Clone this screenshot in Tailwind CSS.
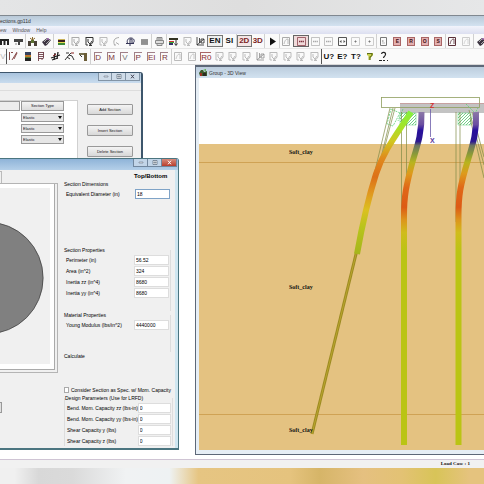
<!DOCTYPE html>
<html lang="en">

<head>
    <meta charset="UTF-8">
    <meta name="viewport" content="width=device-width, initial-scale=1.0">
    <script src="https://cdn.jsdelivr.net/npm/@tailwindcss/browser@4"></script>
    <title>Group - 3D View</title>
</head>

<body class="min-h-screen flex flex-col overflow-hidden bg-white font-['Liberation_Sans',sans-serif] text-[5px] leading-[8px] text-[#111]">

    <!-- Icon sprites -->
    <svg class="hidden">
        <symbol id="i-piles" viewBox="0 0 11 11"><path d="M1 3h9v2H1zM1 5h2v4H1zM4.500 5h2v4h-2zM8 5h2v4H8z" fill="#222" /></symbol>
        <symbol id="i-cap" viewBox="0 0 11 11"><path d="M1 3h9v3H7v3H5V6H1z" fill="#444" /><path d="M2 8h2" stroke="#888" /></symbol>
        <symbol id="i-load" viewBox="0 0 11 11"><path d="M5.500 1v3M3 2l2.500 2L8 2" stroke="#8a6a30" fill="none" /><path d="M1 5h9v2H1zM1 7h3v3H1zM7 7h3v3H7z" fill="#4a4238" /><path d="M4 4h3v3H4z" fill="#5a7030" /></symbol>
        <symbol id="i-tag" viewBox="0 0 11 11"><path d="M1 6l5-4 4 2-4 5-2 1z" fill="#3b3340" /><path d="M3 6l3-3M5 8l4-4" stroke="#aaa" /><circle cx="7" cy="3" r="1" fill="#a06ab0" /></symbol>
        <symbol id="i-layers" viewBox="0 0 11 11"><path d="M2 3h7v1H2z" fill="#c9b15a" /><path d="M2 4h7v2H2z" fill="#3c2020" /><path d="M2 6h7v1H2z" fill="#e4d84a" /><path d="M2 7h7v2H2z" fill="#3f8a3a" /></symbol>
        <symbol id="i-plot" viewBox="0 0 11 11"><path d="M2 1v8h2M2 1.500h7V6L7 8.500H5.500M4 3v3l2 2 2-3" stroke="currentColor" fill="none" /><path d="M5 9.500h3" stroke="currentColor" /></symbol>
        <symbol id="i-curve" viewBox="0 0 11 11"><path d="M8 1.500C3 2 2 5 3.500 9M5 6.500l3 2M3 9h2" stroke="currentColor" fill="none" /></symbol>
        <symbol id="i-rotate" viewBox="0 0 11 11"><path d="M3 8C1 5 3 1.500 6.500 2S10 7 7 7.500M1 7.500h8M5 3v7M5 3h2v4" stroke="currentColor" fill="none" /></symbol>
        <symbol id="i-block" viewBox="0 0 11 11"><path d="M2 3h7v6H2z" fill="#999" /><path d="M2 5h7M2 7h7" stroke="#777" stroke-width=".5" /></symbol>
        <symbol id="i-printer" viewBox="0 0 11 11"><path d="M3 4V1.500h5V4M1.500 4.500h8v3h-8zM3 7v2.500h5V7M4 3h3" stroke="#888" fill="#ddd" /></symbol>
        <symbol id="i-legend" viewBox="0 0 11 11"><path d="M1 2h9v2H1z" fill="#332" /><path d="M1 5h5v1H1z" fill="#c33" /><path d="M1 6h5v1H1z" fill="#3a3" /><path d="M1 7h4v2H1z" fill="#336" /><path d="M8 4v5M6.500 7.500l1.500 2 1.500-2" stroke="#333" fill="none" /></symbol>
        <symbol id="i-axis" viewBox="0 0 11 11"><path d="M2 1v8h7M4.500 2v5M6 3h3v4H6zM2 9l7-6" stroke="#222" fill="none" stroke-width=".8" /></symbol>
        <symbol id="i-play" viewBox="0 0 11 11"><path d="M3 1.500l6 4-6 4z" fill="#111" /></symbol>
        <symbol id="i-frame" viewBox="0 0 11 11"><path d="M1.500 1.500h8v8h-8z" stroke="currentColor" stroke-width=".7" fill="none" /><path d="M3 5.500h5" stroke="currentColor" stroke-width="1.500" stroke-dasharray="1.300 .5" /></symbol>
        <symbol id="i-fit" viewBox="0 0 11 11"><path d="M1.500 1.500h8v8h-8z" stroke="currentColor" fill="none" /><path d="M2.500 5.500L4.500 4v3zM8.500 5.500L6.500 4v3z" fill="currentColor" /></symbol>
        <symbol id="i-dot" viewBox="0 0 11 11"><path d="M1.500 1.500h8v8h-8z" stroke="#ccc" fill="none" /><path d="M4.500 5.500h2M5.500 4.500v2" stroke="#777" /></symbol>
        <symbol id="i-page" viewBox="0 0 11 11"><path d="M2.500 1.500h6v8h-6zM4 5h1.500" stroke="#777" fill="none" /><path d="M4 7h3" stroke="#bbb" /></symbol>
        <symbol id="i-graph" viewBox="0 0 11 11"><path d="M1.500 1.500h7v8h-7z" stroke="currentColor" fill="none" /><path d="M3 8c1-4 2-5 4-5v5" stroke="currentColor" fill="none" stroke-width=".8" /></symbol>
        <symbol id="i-batter" viewBox="0 0 11 11"><path d="M1.500 1v8M3 1.500h2M4 9L9 1M6 8l3-6" stroke="#7a3535" fill="none" stroke-width=".9" /></symbol>
        <symbol id="i-soil" viewBox="0 0 11 11"><path d="M3 1h6v3H3z" fill="#35415c" /><path d="M3 4h6v2H3z" fill="#c0792c" /><path d="M3 6h6v1H3z" fill="#4d7a3a" /><path d="M3 7h6v3H3z" fill="#222" /></symbol>
        <symbol id="i-table" viewBox="0 0 11 11"><path d="M2.500 1v9M2 1.500h6M2 3.500h6M2 5.500h6M2 7.500h5M7.500 1v6l-2 2" stroke="#6e4048" fill="none" stroke-width=".9" /></symbol>
        <symbol id="i-hash" viewBox="0 0 11 11"><path d="M1 7l9-3M2 9l6-2M4 9l1-7M7 8l1-7" stroke="#222" stroke-width="1.300" /><path d="M3 5l3-2" stroke="#8a2020" /></symbol>
        <symbol id="i-force" viewBox="0 0 11 11"><path d="M1 9l4-5 2-2M5 4l3 1 2 4M2 2h3M3 6l3 2" stroke="#333" fill="none" /><path d="M7 2h3" stroke="#8a2020" /></symbol>
        <symbol id="i-wall" viewBox="0 0 11 11"><path d="M1 2h7v2H1z" fill="#777050" /><path d="M6 2h3v8H6z" fill="#6b5d38" /><path d="M2 4l2 2" stroke="#333" /></symbol>
        <symbol id="i-bulb" viewBox="0 0 11 11"><path d="M3 2h6v2L6.500 7V9h-2V5L3 4z" fill="#a9b52c" /><path d="M3 2.500h5v2L6 6v3" stroke="#4d5a1c" stroke-width=".8" fill="none" /><path d="M4 4h3" stroke="#e8ee70" /></symbol>
        <symbol id="i-help" viewBox="0 0 11 11"><path d="M3.500 3C4 .5 8 1 7.500 3.500S5.500 5 5.500 7M1 9.500h3M5 9.500h2M9 9.500h1" stroke="#222" fill="none" stroke-width="1.200" /></symbol>
        <symbol id="i-min" viewBox="0 0 9 5"><path d="M3 2h4v1H3z" fill="#fff" stroke="#56677a" stroke-width=".5" /></symbol>
        <symbol id="i-max" viewBox="0 0 9 5"><path d="M3 .5h4v4H3zM4 2h2v1H4z" fill="#fff" stroke="#56677a" stroke-width=".7" /></symbol>
        <symbol id="i-close" viewBox="0 0 9 5"><path d="M3 .7l3 3.600M6 .7L3 4.300" stroke="currentColor" stroke-width="1" /></symbol>
    </svg>

    <!-- Faded band above the application -->
    <div class="h-[15px] bg-linear-to-r from-[#e4e5e6] via-[#dedede] to-[#e6e7e8]"></div>

    <header class="border-t border-[#808890]">
        <div class="h-[10px] pt-px bg-linear-to-b from-[#b9c9d8] to-[#d3e2f0]">
            <h1 class="leading-[8px] text-[#333]">ections.gp11d</h1>
        </div>
        <nav class="flex h-[8px] gap-[6px] bg-linear-to-b from-[#f2f4fb] to-[#dcdff0] text-[#555]">
            <a href="#">ew</a>
            <a href="#">Window</a>
            <a href="#">Help</a>
        </nav>

        <!-- Toolbar 1 -->
        <div class="flex h-[15px] -ml-[3px] bg-[#fafafa] border-b border-[#e6e6e6] font-bold text-[8px] *:flex *:shrink-0 *:items-center *:border-[#d0d0d0] [&_button]:flex [&_button]:flex-1 [&_button]:h-[12px] [&_button]:items-center [&_button]:justify-center [&_svg]:size-[11px]">
            <div class="w-[28px]">
                <button aria-label="Piles"><svg><use href="#i-piles" /></svg></button>
                <button aria-label="Cap"><svg><use href="#i-cap" /></svg></button>
            </div>
            <div class="w-[28px] border-l">
                <button aria-label="Loads"><svg><use href="#i-load" /></svg></button>
                <button aria-label="Properties"><svg><use href="#i-tag" /></svg></button>
            </div>
            <div class="w-[15px] border-l">
                <button aria-label="Layers"><svg><use href="#i-layers" /></svg></button>
            </div>
            <div class="w-[83px] border-l text-[#aaa]">
                <button aria-label="Plot"><svg><use href="#i-plot" /></svg></button>
                <button aria-label="Plot values" class="text-[#333]"><svg><use href="#i-plot" /></svg></button>
                <button aria-label="Plot forces" class="text-[#bbb]"><svg><use href="#i-plot" /></svg></button>
                <button aria-label="Curve"><svg><use href="#i-curve" /></svg></button>
                <button aria-label="Rotate" class="text-[#335]"><svg><use href="#i-rotate" /></svg></button>
                <button aria-label="Block"><svg><use href="#i-block" /></svg></button>
            </div>
            <div class="w-[15px] border-l">
                <button aria-label="Print"><svg><use href="#i-printer" /></svg></button>
            </div>
            <div class="w-[70px] border-l">
                <button aria-label="Legend"><svg><use href="#i-legend" /></svg></button>
                <button aria-label="Plot legend" class="text-[#bbb]"><svg><use href="#i-plot" /></svg></button>
                <button aria-label="Axis"><svg><use href="#i-axis" /></svg></button>
                <button class="border border-[#777] bg-[#eee]">EN</button>
                <button>SI</button>
            </div>
            <div class="w-[28px] border-l text-[#7c1f1f]">
                <button class="border border-[#777] bg-[#f4e6e6]">2D</button>
                <button>3D</button>
            </div>
            <div class="w-[15px] border-l">
                <button aria-label="Run"><svg><use href="#i-play" /></svg></button>
            </div>
            <div class="w-[97px] border-l text-[#aaa]">
                <button aria-label="Graph"><svg><use href="#i-graph" /></svg></button>
                <button aria-label="Fit width" class="border border-[#666] bg-[#f0dada] text-[#7c2f3c]"><svg><use href="#i-frame" /></svg></button>
                <button aria-label="Frame"><svg><use href="#i-frame" /></svg></button>
                <button aria-label="Window"><svg><use href="#i-frame" /></svg></button>
                <button aria-label="Zoom fit" class="text-[#555]"><svg><use href="#i-fit" /></svg></button>
                <button aria-label="Zoom in"><svg><use href="#i-dot" /></svg></button>
                <button aria-label="Zoom out"><svg><use href="#i-dot" /></svg></button>
            </div>
            <div class="w-[69px] border-l text-[5px] leading-[7px] text-[#3c0d12]">
                <button aria-label="Page"><svg><use href="#i-page" /></svg></button>
                <button><span class="w-[8px] border border-[#a66] bg-[#e3b0b0]">E</span></button>
                <button><span class="w-[8px] border border-[#a66] bg-[#e3b0b0]">R</span></button>
                <button><span class="w-[8px] border border-[#a66] bg-[#e3b0b0]">O</span></button>
                <button><span class="w-[8px] border border-[#a66] bg-[#e3b0b0]">S</span></button>
            </div>
            <div class="w-[28px] border-l">
                <button aria-label="Chart" class="text-[#5b3038]"><svg><use href="#i-graph" /></svg></button>
                <button aria-label="Chart off" class="text-[#ccc]"><svg><use href="#i-graph" /></svg></button>
            </div>
            <div class="w-[15px] border-l">
                <button aria-label="Report"><svg><use href="#i-tag" /></svg></button>
            </div>
        </div>

        <!-- Toolbar 2 -->
        <div class="flex h-[15px] bg-[#fafafa] text-[8px] *:flex *:shrink-0 *:items-center *:border-[#d0d0d0] [&_button]:flex [&_button]:flex-1 [&_button]:h-[12px] [&_button]:items-center [&_button]:justify-center [&_svg]:size-[11px]">
            <div class="w-[6px] text-[#bbb]"><button>V</button></div>
            <div class="w-[84px] border-l border-[#555]!">
                <button aria-label="Batter"><svg><use href="#i-batter" /></svg></button>
                <button aria-label="Soil"><svg><use href="#i-soil" /></svg></button>
                <button aria-label="Table"><svg><use href="#i-table" /></svg></button>
                <button aria-label="Grid"><svg><use href="#i-hash" /></svg></button>
                <button aria-label="Force"><svg><use href="#i-force" /></svg></button>
                <button aria-label="Wall"><svg><use href="#i-wall" /></svg></button>
            </div>
            <div class="w-[81px] border-l text-[#7a3540] [&_span]:w-[8px] [&_span]:h-[9px] [&_span]:border-l [&_span]:border-t [&_span]:border-[#a08088] [&_span]:leading-[9px]">
                <button><span>D</span></button>
                <button><span>M</span></button>
                <button class="text-[#777]"><span>V</span></button>
                <button><span>P</span></button>
                <button><span>EI</span></button>
                <button><span>R</span></button>
            </div>
            <div class="w-[150px] border-l text-[#bbb]">
                <button aria-label="Curve P"><svg><use href="#i-graph" /></svg></button>
                <button aria-label="Curve Q"><svg><use href="#i-graph" /></svg></button>
                <button class="text-[#8b2a30]"><span class="border-t border-l border-[#a66] h-[9px] leading-[9px]">R0</span></button>
                <button aria-label="Plot 1"><svg><use href="#i-plot" /></svg></button>
                <button aria-label="Plot 2"><svg><use href="#i-plot" /></svg></button>
                <button aria-label="Plot 3"><svg><use href="#i-plot" /></svg></button>
                <button aria-label="Plot 4"><svg><use href="#i-axis" opacity=".5" /></svg></button>
                <button aria-label="Plot 5"><svg><use href="#i-plot" /></svg></button>
                <button aria-label="Plot 6"><svg><use href="#i-plot" /></svg></button>
                <button aria-label="Plot 7"><svg><use href="#i-plot" /></svg></button>
                <button aria-label="Plot 8"><svg><use href="#i-plot" /></svg></button>
            </div>
            <div class="w-[69px] border-l border-[#555]! font-bold">
                <button>U?</button>
                <button>E?</button>
                <button>T?</button>
                <button aria-label="Tips"><svg><use href="#i-bulb" /></svg></button>
                <button aria-label="Help"><svg><use href="#i-help" /></svg></button>
            </div>
        </div>
    </header>

    <!-- MDI desktop -->
    <main class="relative grow min-h-[395px] overflow-hidden bg-white border-t border-[#d8d8d8]">

        <!-- Section list window -->
        <section class="absolute left-0 top-[7px] w-[143px] h-[100px] rounded-tr-[3px] border-t border-r-2 border-[#3d566c] bg-[#f0f0f0]">
            <div class="flex justify-end h-[10px] pr-px bg-linear-to-b from-[#a9c4de] to-[#c9dcee] rounded-tr-[2px]">
                <div class="flex h-[8px] border border-t-0 border-[#8294a6] bg-[#cfdce9] divide-x divide-[#8294a6] text-[#445]">
                    <button aria-label="Minimize" class="w-[13px] flex items-center justify-center"><svg class="w-[9px] h-[5px]"><use href="#i-min" /></svg></button>
                    <button aria-label="Maximize" class="w-[14px] flex items-center justify-center"><svg class="w-[9px] h-[5px]"><use href="#i-max" /></svg></button>
                    <button aria-label="Close" class="w-[13px] flex items-center justify-center"><svg class="w-[9px] h-[5px]"><use href="#i-close" /></svg></button>
                </div>
            </div>
            <div class="h-[8px] border-b border-[#ddd]"></div>
            <div class="flex pt-[9px]">
                <div class="flex w-[78px] h-[58px] gap-px border-t border-r border-[#d0d0d0] bg-white text-[4px]">
                    <div class="w-[20px] h-[10px] border border-l-0 border-[#999] bg-[#ececec]"></div>
                    <div class="flex flex-col gap-[2px] w-[43px]">
                        <div class="h-[10px] border border-[#999] bg-linear-to-b from-[#f4f4f4] to-[#dcdcdc] text-center leading-[8px]">Section Type</div>
                        <div class="relative h-[9px]">
                            <select aria-label="Section type 1" class="block appearance-none w-full h-full pl-px border border-[#999] bg-[#e6e6e6] leading-[7px]"><option>Elastic</option></select>
                            <svg class="absolute right-[2px] top-[3px] w-[4px] h-[3px] pointer-events-none" viewBox="0 0 4 3"><path d="M0 0h4L2 3z" fill="#111" /></svg>
                        </div>
                        <div class="relative h-[9px]">
                            <select aria-label="Section type 2" class="block appearance-none w-full h-full pl-px border border-[#999] bg-[#e6e6e6] leading-[7px]"><option>Elastic</option></select>
                            <svg class="absolute right-[2px] top-[3px] w-[4px] h-[3px] pointer-events-none" viewBox="0 0 4 3"><path d="M0 0h4L2 3z" fill="#111" /></svg>
                        </div>
                        <div class="relative h-[9px]">
                            <select aria-label="Section type 3" class="block appearance-none w-full h-full pl-px border border-[#999] bg-[#e6e6e6] leading-[7px]"><option>Elastic</option></select>
                            <svg class="absolute right-[2px] top-[3px] w-[4px] h-[3px] pointer-events-none" viewBox="0 0 4 3"><path d="M0 0h4L2 3z" fill="#111" /></svg>
                        </div>
                    </div>
                </div>
                <div class="flex flex-col gap-[10px] w-[55px] pl-[9px] pt-[4px] text-[4px]">
                    <button class="h-[11px] rounded-[1px] border border-[#999] bg-linear-to-b from-[#f4f4f4] to-[#d8d8d8]">Add Section</button>
                    <button class="h-[11px] rounded-[1px] border border-[#999] bg-linear-to-b from-[#f4f4f4] to-[#d8d8d8]">Insert Section</button>
                    <button class="h-[11px] rounded-[1px] border border-[#999] bg-linear-to-b from-[#f4f4f4] to-[#d8d8d8]">Delete Section</button>
                </div>
            </div>
        </section>

        <!-- Section properties window -->
        <section class="absolute left-0 top-[93px] w-[179px] h-[292px] flex flex-col rounded-tr-[3px] border-t border-r border-b-2 border-[#4b7580] bg-[#f0f0f0]">
            <div class="flex justify-end shrink-0 h-[11px] pr-px bg-linear-to-b from-[#8fb4d8] to-[#b4cfe9]">
                <div class="flex h-[8px] border border-t-0 border-[#71879e] bg-[#c2d5e8] divide-x divide-[#71879e]">
                    <button aria-label="Minimize" class="w-[14px] flex items-center justify-center"><svg class="w-[9px] h-[5px]"><use href="#i-min" /></svg></button>
                    <button aria-label="Maximize" class="w-[14px] flex items-center justify-center"><svg class="w-[9px] h-[5px]"><use href="#i-max" /></svg></button>
                    <button aria-label="Close" class="w-[14px] flex items-center justify-center bg-linear-to-b from-[#d58a7c] to-[#b83c2c] text-white"><svg class="w-[9px] h-[5px]"><use href="#i-close" /></svg></button>
                </div>
            </div>
            <div class="flex grow border-r-3 border-[#cfe6f0]">
                <div class="w-[64px]">
                    <div class="w-[2px] h-[12px] mt-px border-t border-r border-[#bbb]"></div>
                    <div class="w-[58px] h-[190px] pr-[2px] pb-[2px] border-t border-r border-b border-[#b4b4b4]">
                        <div class="w-full h-full pt-[4px] pr-[4px] pb-[5px] bg-white border-r border-b border-[#aaa]">
                            <svg class="w-full h-full bg-[#f0f0f0]" viewBox="0 187 51 178"><circle cx="-13" cy="278" r="57" fill="#808080" stroke="#333" stroke-width=".7" /></svg>
                        </div>
                    </div>
                    <button aria-label="Scroll" class="block w-[2px] h-[11px] mt-[29px] border-y border-r border-[#999] bg-[#e0e0e0]"></button>
                </div>
                <form class="w-[107px] text-black [&_legend]:h-[8px] [&_fieldset]:border-r [&_fieldset]:border-[#ddd] [&_fieldset>div]:flex [&_fieldset>div]:h-[11px] [&_fieldset>div]:items-center [&_fieldset>div]:justify-between [&_fieldset>div]:pl-[2px] [&_fieldset>div]:pr-px [&_label]:whitespace-nowrap">
                    <h2 class="h-[10px] pl-[70px] pt-[2px] text-[6px] font-bold">Top/Bottom</h2>
                    <fieldset class="h-[66px] border-r-0!">
                        <legend>Section Dimensions</legend>
                        <div><label for="diameter">Equivalent Diameter (in)</label><input id="diameter" value="18" class="w-[35px] h-[10px] pl-px border border-[#7fa3c7] bg-white"></div>
                    </fieldset>
                    <fieldset class="h-[65px]">
                        <legend>Section Properties</legend>
                        <div><label for="perimeter">Perimeter (in)</label><input id="perimeter" value="56.52" class="w-[35px] h-[10px] pl-px border border-[#ddd] bg-white"></div>
                        <div><label for="area">Area (in^2)</label><input id="area" value="324" class="w-[35px] h-[10px] pl-px border border-[#ddd] bg-white"></div>
                        <div><label for="izz">Inertia zz (in^4)</label><input id="izz" value="8680" class="w-[35px] h-[10px] pl-px border border-[#ddd] bg-white"></div>
                        <div><label for="iyy">Inertia yy (in^4)</label><input id="iyy" value="8680" class="w-[35px] h-[10px] pl-px border border-[#ddd] bg-white"></div>
                    </fieldset>
                    <fieldset class="h-[41px]">
                        <legend>Material Properties</legend>
                        <div><label for="young">Young Modulus (lbs/in^2)</label><input id="young" value="4440000" class="w-[35px] h-[10px] pl-px border border-[#ddd] bg-white"></div>
                    </fieldset>
                    <fieldset class="h-[33px] border-r-0!">
                        <legend>Calculate</legend>
                    </fieldset>
                    <label class="flex items-center gap-[2px] h-[9px]"><input type="checkbox" class="appearance-none size-[6px] border border-[#aaa] bg-white">Consider Section as Spec. w/ Mom. Capacity</label>
                    <fieldset class="border-l">
                        <legend>Design Parameters (Use for LRFD)</legend>
                        <div><label for="mzz">Bend. Mom. Capacity zz (lbs-in)</label><input id="mzz" value="0" class="w-[33px] h-[10px] pl-px border border-[#ddd] bg-white"></div>
                        <div><label for="myy">Bend. Mom. Capacity yy (lbs-in)</label><input id="myy" value="0" class="w-[33px] h-[10px] pl-px border border-[#ddd] bg-white"></div>
                        <div><label for="vy">Shear Capacity y (lbs)</label><input id="vy" value="0" class="w-[33px] h-[10px] pl-px border border-[#ddd] bg-white"></div>
                        <div><label for="vz">Shear Capacity z (lbs)</label><input id="vz" value="0" class="w-[33px] h-[10px] pl-px border border-[#ddd] bg-white"></div>
                    </fieldset>
                </form>
            </div>
        </section>

        <!-- 3D view window -->
        <section class="absolute left-[195px] right-0 top-0 h-[390px] flex flex-col border-l border-t-2 border-b border-[#5d6878] bg-[#dce8f3]">
            <div class="flex items-center gap-[2px] h-[11px] pl-[3px] bg-linear-to-b from-[#bccddd] to-[#d2e2f0] text-[#333]">
                <svg class="size-[8px]" viewBox="0 0 8 8"><path d="M0 4l2-3h2l1 2 3-1v5H1z" fill="#3b5a2c" /><path d="M1 4h2v3H1z" fill="#a03020" /><path d="M4 1l3-1v2z" fill="#58b04a" /><path d="M4 4h3v3H4z" fill="#2b2b22" /></svg>
                <h2>Group - 3D View</h2>
            </div>
            <div class="pl-[3px] grow overflow-hidden bg-[#e6eef5]">
                <svg class="w-full h-[372px] bg-white" viewBox="199 78 285 372" preserveAspectRatio="xMinYMin slice">
                    <defs>
                        <linearGradient id="g-batter" gradientUnits="userSpaceOnUse" x1="0" y1="112" x2="0" y2="256">
                            <stop offset="0" stop-color="#86f03c" /><stop offset=".1" stop-color="#a4e428" /><stop offset=".2" stop-color="#d0c820" /><stop offset=".32" stop-color="#e08a1c" /><stop offset=".45" stop-color="#dd7018" /><stop offset=".56" stop-color="#e0961e" /><stop offset=".68" stop-color="#dcc020" /><stop offset=".8" stop-color="#b8c41c" /><stop offset="1" stop-color="#a4b41c" />
                        </linearGradient>
                        <linearGradient id="g-pile" gradientUnits="userSpaceOnUse" x1="0" y1="112" x2="0" y2="252">
                            <stop offset="0" stop-color="#8c78a8" /><stop offset=".09" stop-color="#6a4ea0" /><stop offset=".13" stop-color="#28109c" /><stop offset=".21" stop-color="#2c1890" /><stop offset=".24" stop-color="#6d7660" /><stop offset=".3" stop-color="#8a9a38" /><stop offset=".36" stop-color="#b8b41e" /><stop offset=".44" stop-color="#de9a1c" /><stop offset=".54" stop-color="#e06818" /><stop offset=".68" stop-color="#dd5a14" /><stop offset=".77" stop-color="#dd941c" /><stop offset=".86" stop-color="#d0bc1c" /><stop offset="1" stop-color="#bac414" />
                        </linearGradient>
                        <pattern id="p-hatch" width="3" height="3" patternUnits="userSpaceOnUse"><path d="M0 3L3 0" stroke="#4fc46a" stroke-width=".8" /></pattern>
                    </defs>
                    <rect x="199" y="144" width="2000" height="400" fill="#e4c281" />
                    <path d="M199 162.500h2000M199 414.500h2000" stroke="#cfa254" />
                    <!-- pile cap -->
                    <rect x="400" y="103" width="2000" height="10" fill="#c3c3c3" />
                    <rect x="381.500" y="97.500" width="98" height="10" fill="none" stroke="#8f9f5e" stroke-width=".8" />
                    <path d="M400 103.500h2000" stroke="#c98a8a" stroke-width=".6" />
                    <path d="M400 113h16v12h-16zM458 113h13v12h-13z" fill="url(#p-hatch)" stroke="#5cc878" stroke-width=".5" />
                    <path d="M400 113l-9-4-4 15 6 2zM403 109l-5 12M466 104l8 8M470 122l8-14" fill="none" stroke="#5cd078" stroke-width=".8" stroke-dasharray="2 1" />
                    <!-- undeformed piles -->
                    <path d="M401.500 112v110M406.500 112v90M456 112v110M460 112v80" stroke="#7f8a45" stroke-width=".7" />
                    <path d="M390 108L368 200L356 250M393 108L372 195M395 108L376 180M469 110L484 165M472 112L484 157M470 118L484 178" fill="none" stroke="#7f8a45" stroke-width=".7" />
                    <!-- deformed piles -->
                    <path d="M357 250L312 434" stroke="#9c8b22" stroke-width="3" />
                    <path d="M357 250L312 434" stroke="#baa42c" stroke-width="1" />
                    <path d="M411 112C397 134 384 150 376 174C368 199 362 226 357 254" fill="none" stroke="url(#g-batter)" stroke-width="6" />
                    <path d="M421.500 112C422 132 418 144 413 160C406 186 404 196 404 216V445" fill="none" stroke="url(#g-pile)" stroke-width="6" />
                    <path d="M476 112C477 132 473 144 468 160C460 186 458.500 196 458.500 216V445" fill="none" stroke="url(#g-pile)" stroke-width="6" />
                    <path d="M430.500 109v28" stroke="#6a5aa8" stroke-width=".8" />
                    <g font-family="Liberation Sans" font-size="7" font-weight="bold">
                        <text x="430" y="108" fill="#d43030">Z</text>
                        <text x="430" y="143" fill="#5b3a9c">X</text>
                    </g>
                    <g font-family="Liberation Serif" font-size="6" font-weight="bold" fill="#111">
                        <text x="289" y="154">Soft_clay</text>
                        <text x="289" y="289">Soft_clay</text>
                        <text x="289" y="432">Soft_clay</text>
                    </g>
                </svg>
            </div>
        </section>
    </main>

    <footer>
        <div class="h-[9px] pr-[14px] border-t border-[#cfc4d4] bg-[#f1f1f1] text-right font-['Liberation_Serif',serif] font-bold">Load Case : 1</div>
        <!-- Faded band below the application -->
        <div class="h-[16px] bg-[linear-gradient(90deg,#f0f0f0_3%,#d8d8d8_8%,#dadada_15%,#f0f2f3_26%,#eef2f3_35%,#e6c582_41%,#e5c37e_60%,#d6b568_66%,#e5c080_75%,#e3c274_83%,#d8c458_90%,#e5c37e_97%)]"></div>
    </footer>
</body>

</html>
